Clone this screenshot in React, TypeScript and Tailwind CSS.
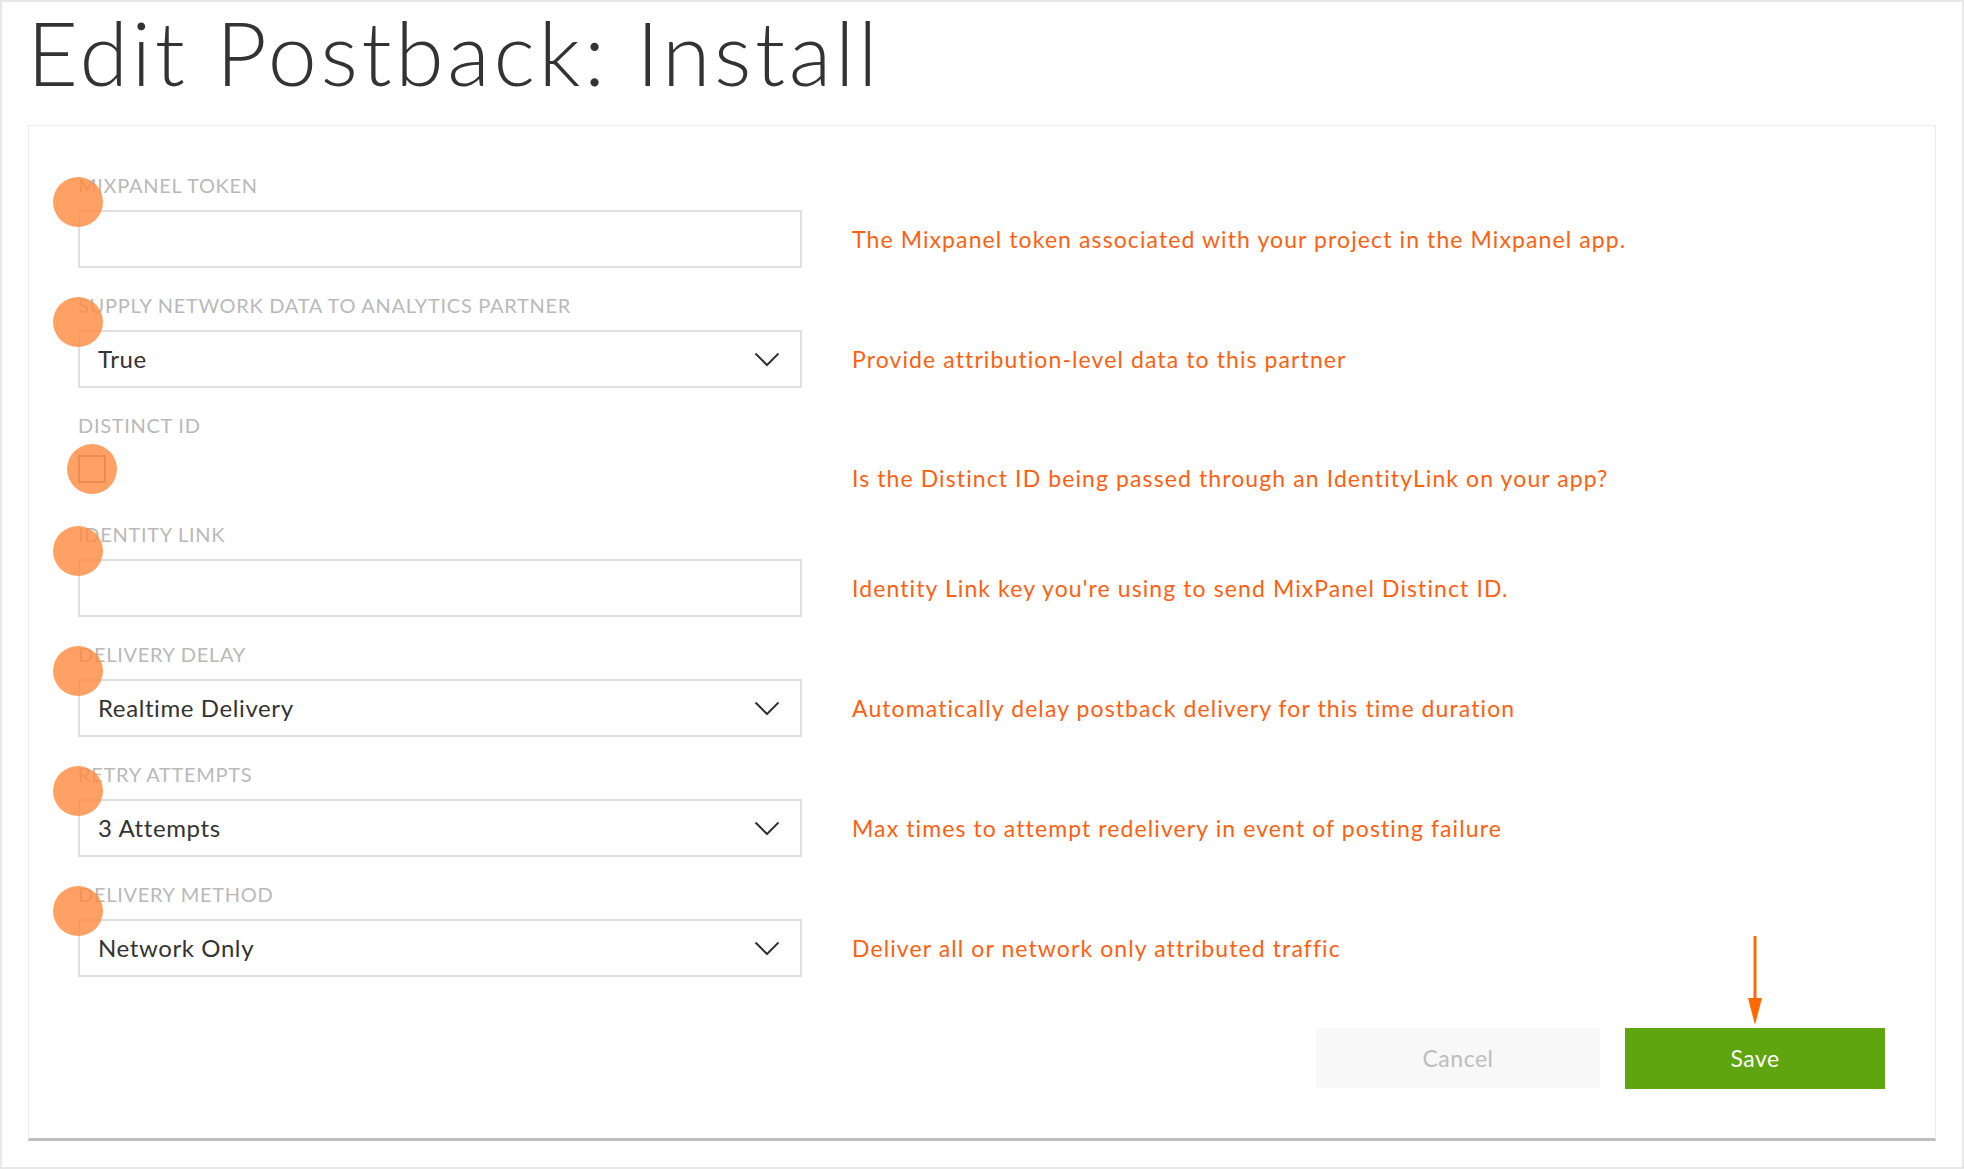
import React from 'react';

type Field = {
  label: string;
  kind: 'input' | 'select' | 'checkbox';
  value?: string;
  help: string;
};

const fields: Field[] = [
  { label: 'MIXPANEL TOKEN', kind: 'input', help: 'The Mixpanel token associated with your project in the Mixpanel app.' },
  { label: 'SUPPLY NETWORK DATA TO ANALYTICS PARTNER', kind: 'select', value: 'True', help: 'Provide attribution-level data to this partner' },
  { label: 'DISTINCT ID', kind: 'checkbox', help: 'Is the Distinct ID being passed through an IdentityLink on your app?' },
  { label: 'IDENTITY LINK', kind: 'input', help: "Identity Link key you're using to send MixPanel Distinct ID." },
  { label: 'DELIVERY DELAY', kind: 'select', value: 'Realtime Delivery', help: 'Automatically delay postback delivery for this time duration' },
  { label: 'RETRY ATTEMPTS', kind: 'select', value: '3 Attempts', help: 'Max times to attempt redelivery in event of posting failure' },
  { label: 'DELIVERY METHOD', kind: 'select', value: 'Network Only', help: 'Deliver all or network only attributed traffic' },
];

const font = { fontFamily: 'Lato, "Open Sans", sans-serif' };

const Chevron = () => (
  <svg width="26" height="15" viewBox="0 0 26 15" fill="none">
    <polyline points="1.5,1.5 13,13 24.5,1.5" stroke="#333" strokeWidth="2" strokeLinejoin="miter" />
  </svg>
);

// annotation marker laid over each field
const Marker: React.FC<{ className?: string }> = ({ className = '' }) => (
  <span className={`absolute w-[50px] h-[50px] rounded-full bg-[#ff8a3d]/80 pointer-events-none ${className}`} />
);

const FieldRow: React.FC<{ field: Field }> = ({ field }) => {
  const isCheck = field.kind === 'checkbox';
  return (
    <div className="flex mb-[26px]">
      <div className="relative w-[724px] shrink-0">
        <div className="h-[22px] leading-[22px] text-[20px] text-[#b9b9b9] tracking-[0.7px] mb-[14px]">
          {field.label}
        </div>
        {field.kind === 'input' && (
          <div className="h-[58px] border-2 border-[#dedede] bg-white" />
        )}
        {field.kind === 'select' && (
          <div className="h-[58px] border-2 border-[#dedede] bg-white flex items-center justify-between pl-[18px] pr-[20px]">
            <span className="text-[24px] tracking-[0.6px] text-[#333]">{field.value}</span>
            <Chevron />
          </div>
        )}
        {isCheck && (
          <div className="h-[47px] pt-[5px]">
            <div className="w-[28px] h-[28px] border-2 border-[#9a9a9a] bg-white" />
          </div>
        )}
        {isCheck ? (
          <Marker className="left-[-11px] top-[30px]" />
        ) : (
          <Marker className="left-[-25px] top-[3px]" />
        )}
      </div>
      <div className={`flex items-center pl-[50px] text-[23px] tracking-[1.1px] text-[#ff5f0f] ${isCheck ? 'pt-[46px]' : 'pt-[36px]'}`}>
        {field.help}
      </div>
    </div>
  );
};

export default function App() {
  return (
    <div style={font} className="w-full h-[1169px] border-2 border-[#e8e8e8] bg-white overflow-hidden">
      <h1 className="pl-[25px] h-[123px] text-[88px] leading-[100px] font-light text-[#333] tracking-[3.6px]">
        Edit Postback: Install
      </h1>
      <div className="mx-[26px] border border-[#ececec] border-b-[3px] border-b-[#bdbdbd] bg-white pl-[49px] pr-[50px] pt-[48px] pb-[49px]">
        {fields.map((f) => (
          <FieldRow key={f.label} field={f} />
        ))}
        <div className="flex justify-end gap-[25px] mt-[51px]">
          <button className="w-[284px] h-[60px] bg-[#f8f8f8] text-[23px] tracking-[0.5px] text-[#bdbdbd]">Cancel</button>
          <div className="relative">
            <button className="w-[260px] h-[61px] bg-[#5fa50f] text-[23px] tracking-[0.5px] text-white">Save</button>
            <svg className="absolute left-[121px] top-[-92px]" width="18" height="90" viewBox="0 0 18 90">
              <line x1="9" y1="0" x2="9" y2="64" stroke="#ff6a00" strokeWidth="3" />
              <polygon points="2,62 16,62 9,89" fill="#ff6a00" />
            </svg>
          </div>
        </div>
      </div>
    </div>
  );
}
